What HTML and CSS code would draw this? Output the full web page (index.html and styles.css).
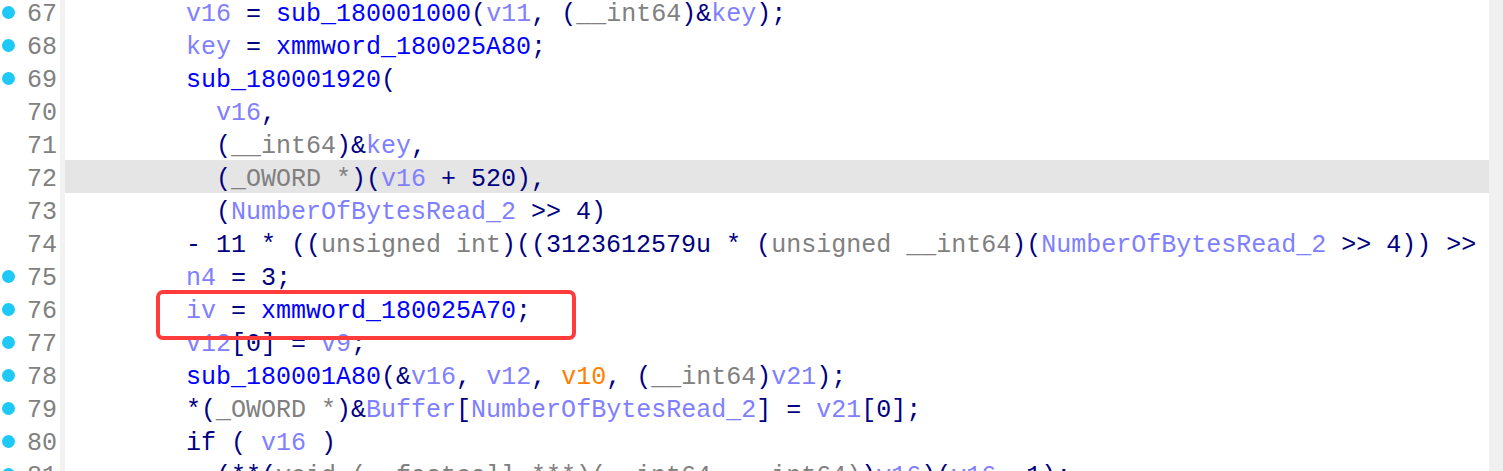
FILE: index.html
```html
<!DOCTYPE html>
<html lang="en">
<head>
    <meta charset="UTF-8">
    <meta name="viewport" content="width=device-width, initial-scale=1.0">
    <title>Pseudocode</title>
    <link rel="stylesheet" href="styles.css">
</head>
<body>
    <div class="view">
        <div class="gutter">
            <div class="gl"><span class="dot"></span><span class="num">67</span></div>
            <div class="gl"><span class="dot"></span><span class="num">68</span></div>
            <div class="gl"><span class="dot"></span><span class="num">69</span></div>
            <div class="gl"><span class="num">70</span></div>
            <div class="gl"><span class="num">71</span></div>
            <div class="gl"><span class="num">72</span></div>
            <div class="gl"><span class="num">73</span></div>
            <div class="gl"><span class="num">74</span></div>
            <div class="gl"><span class="dot"></span><span class="num">75</span></div>
            <div class="gl"><span class="dot"></span><span class="num">76</span></div>
            <div class="gl"><span class="dot"></span><span class="num">77</span></div>
            <div class="gl"><span class="dot"></span><span class="num">78</span></div>
            <div class="gl"><span class="dot"></span><span class="num">79</span></div>
            <div class="gl"><span class="dot"></span><span class="num">80</span></div>
            <div class="gl"><span class="dot"></span><span class="num">81</span></div>
        </div>

        <div class="code">
<div class="ln">        <span class="v">v16</span> = <span class="f">sub_180001000</span>(<span class="v">v11</span>, (<span class="t">__int64</span>)&amp;<span class="v">key</span>);</div>
<div class="ln">        <span class="v">key</span> = <span class="f">xmmword_180025A80</span>;</div>
<div class="ln">        <span class="f">sub_180001920</span>(</div>
<div class="ln">          <span class="v">v16</span>,</div>
<div class="ln">          (<span class="t">__int64</span>)&amp;<span class="v">key</span>,</div>
<div class="ln current">          (<span class="t">_OWORD *</span>)(<span class="v">v16</span> + 520),</div>
<div class="ln">          (<span class="v">NumberOfBytesRead_2</span> &gt;&gt; 4)</div>
<div class="ln">        - 11 * ((<span class="t">unsigned int</span>)((3123612579u * (<span class="t">unsigned __int64</span>)(<span class="v">NumberOfBytesRead_2</span> &gt;&gt; 4)) &gt;&gt; 35));</div>
<div class="ln">        <span class="v">n4</span> = 3;</div>
<div class="ln marked">        <span class="v">iv</span> = <span class="f">xmmword_180025A70</span>;<span class="mark"></span></div>
<div class="ln">        <span class="v">v12</span>[0] = <span class="v">v9</span>;</div>
<div class="ln">        <span class="f">sub_180001A80</span>(&amp;<span class="v">v16</span>, <span class="v">v12</span>, <span class="o">v10</span>, (<span class="t">__int64</span>)<span class="v">v21</span>);</div>
<div class="ln">        *(<span class="t">_OWORD *</span>)&amp;<span class="v">Buffer</span>[<span class="v">NumberOfBytesRead_2</span>] = <span class="v">v21</span>[0];</div>
<div class="ln">        if ( <span class="v">v16</span> )</div>
<div class="ln">          (**(<span class="t">void (__fastcall ***)(__int64, __int64)</span>)<span class="v">v16</span>)(<span class="v">v16</span>, 1);</div>
        </div>

        <div class="scrollbar"></div>
    </div>
</body>
</html>
```

FILE: styles.css
```css
body { margin: 0; background: #fff; }

.view {
    display: flex;
    height: 471px;
    overflow: hidden;
    font-family: "Liberation Mono", "DejaVu Sans Mono", monospace;
    font-size: 25px;
}

.gutter {
    width: 60px;
    flex: none;
    border-right: 5px solid #f2f2f2;
    margin-top: -5px;
}

.gl {
    height: 33px;
    box-sizing: border-box;
    padding: 6px 3px 0 0;
    line-height: 27px;
    display: flex;
    align-items: center;
    color: #808080;
}

.dot {
    width: 13px;
    height: 13px;
    margin: -4px 0 0 2px;
    border-radius: 50%;
    background: #1ec8f7;
}

.num { margin-left: auto; }

.code {
    flex: 1;
    min-width: 0;
    overflow: hidden;
    margin-top: -5px;
    color: #000080;
}

.ln {
    height: 33px;
    box-sizing: border-box;
    padding: 6px 0 0 1px;
    line-height: 27px;
    white-space: pre;
}

.ln.current { background: #e5e5e5; }
.ln.marked { position: relative; }

.mark {
    position: absolute;
    left: 91px;
    top: -2px;
    width: 420px;
    height: 50px;
    box-sizing: border-box;
    border: 4px solid #ff3b3b;
    border-radius: 7px;
}

.v { color: #8080ff; }
.f { color: #0000ff; }
.t { color: #808080; }
.o { color: #ff8000; }

.scrollbar {
    width: 14px;
    flex: none;
    background: #f0f0f0;
}
```
